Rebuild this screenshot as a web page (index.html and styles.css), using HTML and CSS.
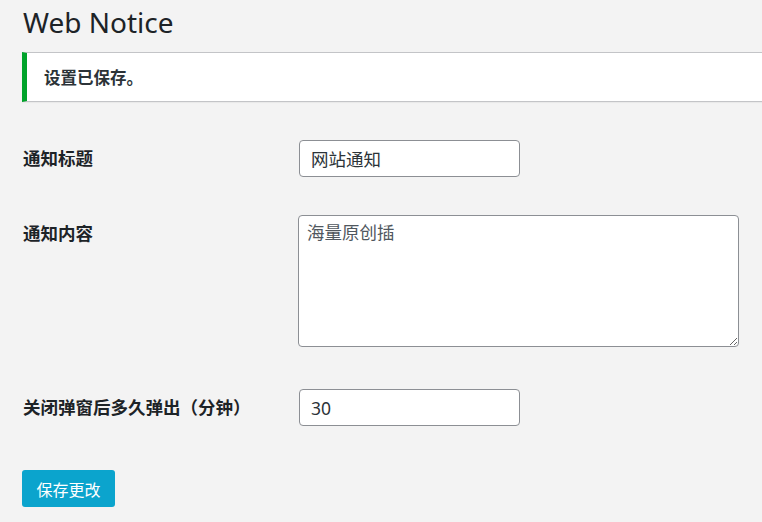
FILE: index.html
```html
<!DOCTYPE html>
<html lang="zh-CN">
<head>
<meta charset="utf-8">
<title>Web Notice</title>
<link rel="stylesheet" href="styles.css">
</head>
<body>
<div class="wrap">
  <h1 class="page-title">Web Notice</h1>
  <div class="notice"><p>设置已保存。</p></div>
  <form class="settings">
    <div class="row">
      <label class="label" for="t">通知标题</label>
      <div class="field"><input id="t" class="text" type="text" value="网站通知"></div>
    </div>
    <div class="row">
      <label class="label" for="c">通知内容</label>
      <div class="field"><textarea id="c" class="area">海量原创插</textarea></div>
    </div>
    <div class="row">
      <label class="label" for="m">关闭弹窗后多久弹出（分钟）</label>
      <div class="field"><input id="m" class="text" type="text" value="30"></div>
    </div>
    <div class="submit"><button type="button" class="btn">保存更改</button></div>
  </form>
</div>
</body>
</html>
```
FILE: styles.css
```css
html, body {
  margin: 0;
  padding: 0;
  background: #f3f3f3;
}
body {
  font-family: "Noto Sans", "Noto Sans CJK SC", sans-serif;
  color: #1d2327;
  overflow: hidden;
}
.wrap {
  padding-left: 22px;
}
.page-title {
  margin: 0;
  padding-top: 4px;
  font-size: 28px;
  font-weight: 400;
  line-height: 36px;
  height: 48px;
  padding-left: 1px;
}
.notice {
  margin-right: -20px;
  background: #fff;
  border: 1px solid #c3c4c7;
  border-left: 5px solid #00a32a;
  height: 48px;
  display: flex;
  align-items: center;
  box-shadow: 0 1px 1px rgba(0,0,0,.04);
}
.notice p {
  margin: 0;
  padding-left: 17px;
  font-size: 16.5px;
  font-weight: 700;
  font-family: "Noto Sans CJK SC", sans-serif;
  color: #2c3338;
}
.settings {
  padding-top: 38px;
}
.row {
  display: grid;
  grid-template-columns: 276px 1fr;
  align-items: start;
  margin-bottom: 38px;
}
.row:nth-child(2) {
  margin-bottom: 42px;
}
.label {
  padding: 6px 0 0 1px;
  line-height: 24px;
  font-size: 17.5px;
  font-weight: 700;
  font-family: "Noto Sans CJK SC", sans-serif;
  color: #1d2327;
}
.field {
  display: flex;
}
.text {
  width: 221px;
  height: 37px;
  box-sizing: border-box;
  margin: 0 0 0 1px;
  border: 1px solid #8c8f94;
  border-radius: 4px;
  background: #fff;
  padding: 0 11px;
  font-size: 17.5px;
  font-family: "Noto Sans", "Noto Sans CJK SC", sans-serif;
  color: #2c3338;
}
.area {
  width: 441px;
  height: 132px;
  box-sizing: border-box;
  margin: 0;
  border: 1px solid #8c8f94;
  border-radius: 4px;
  background: #fff;
  padding: 4px 8px;
  font-size: 17.5px;
  line-height: 24px;
  font-family: "Noto Sans CJK SC", sans-serif;
  color: #50575e;
}
.submit {
  padding-top: 6px;
}
.btn {
  width: 93px;
  height: 37px;
  border: 0;
  border-radius: 3px;
  background: #0ba4cd;
  color: #fff;
  font-size: 16px;
  font-family: "Noto Sans CJK SC", sans-serif;
  padding: 0;
}
```
